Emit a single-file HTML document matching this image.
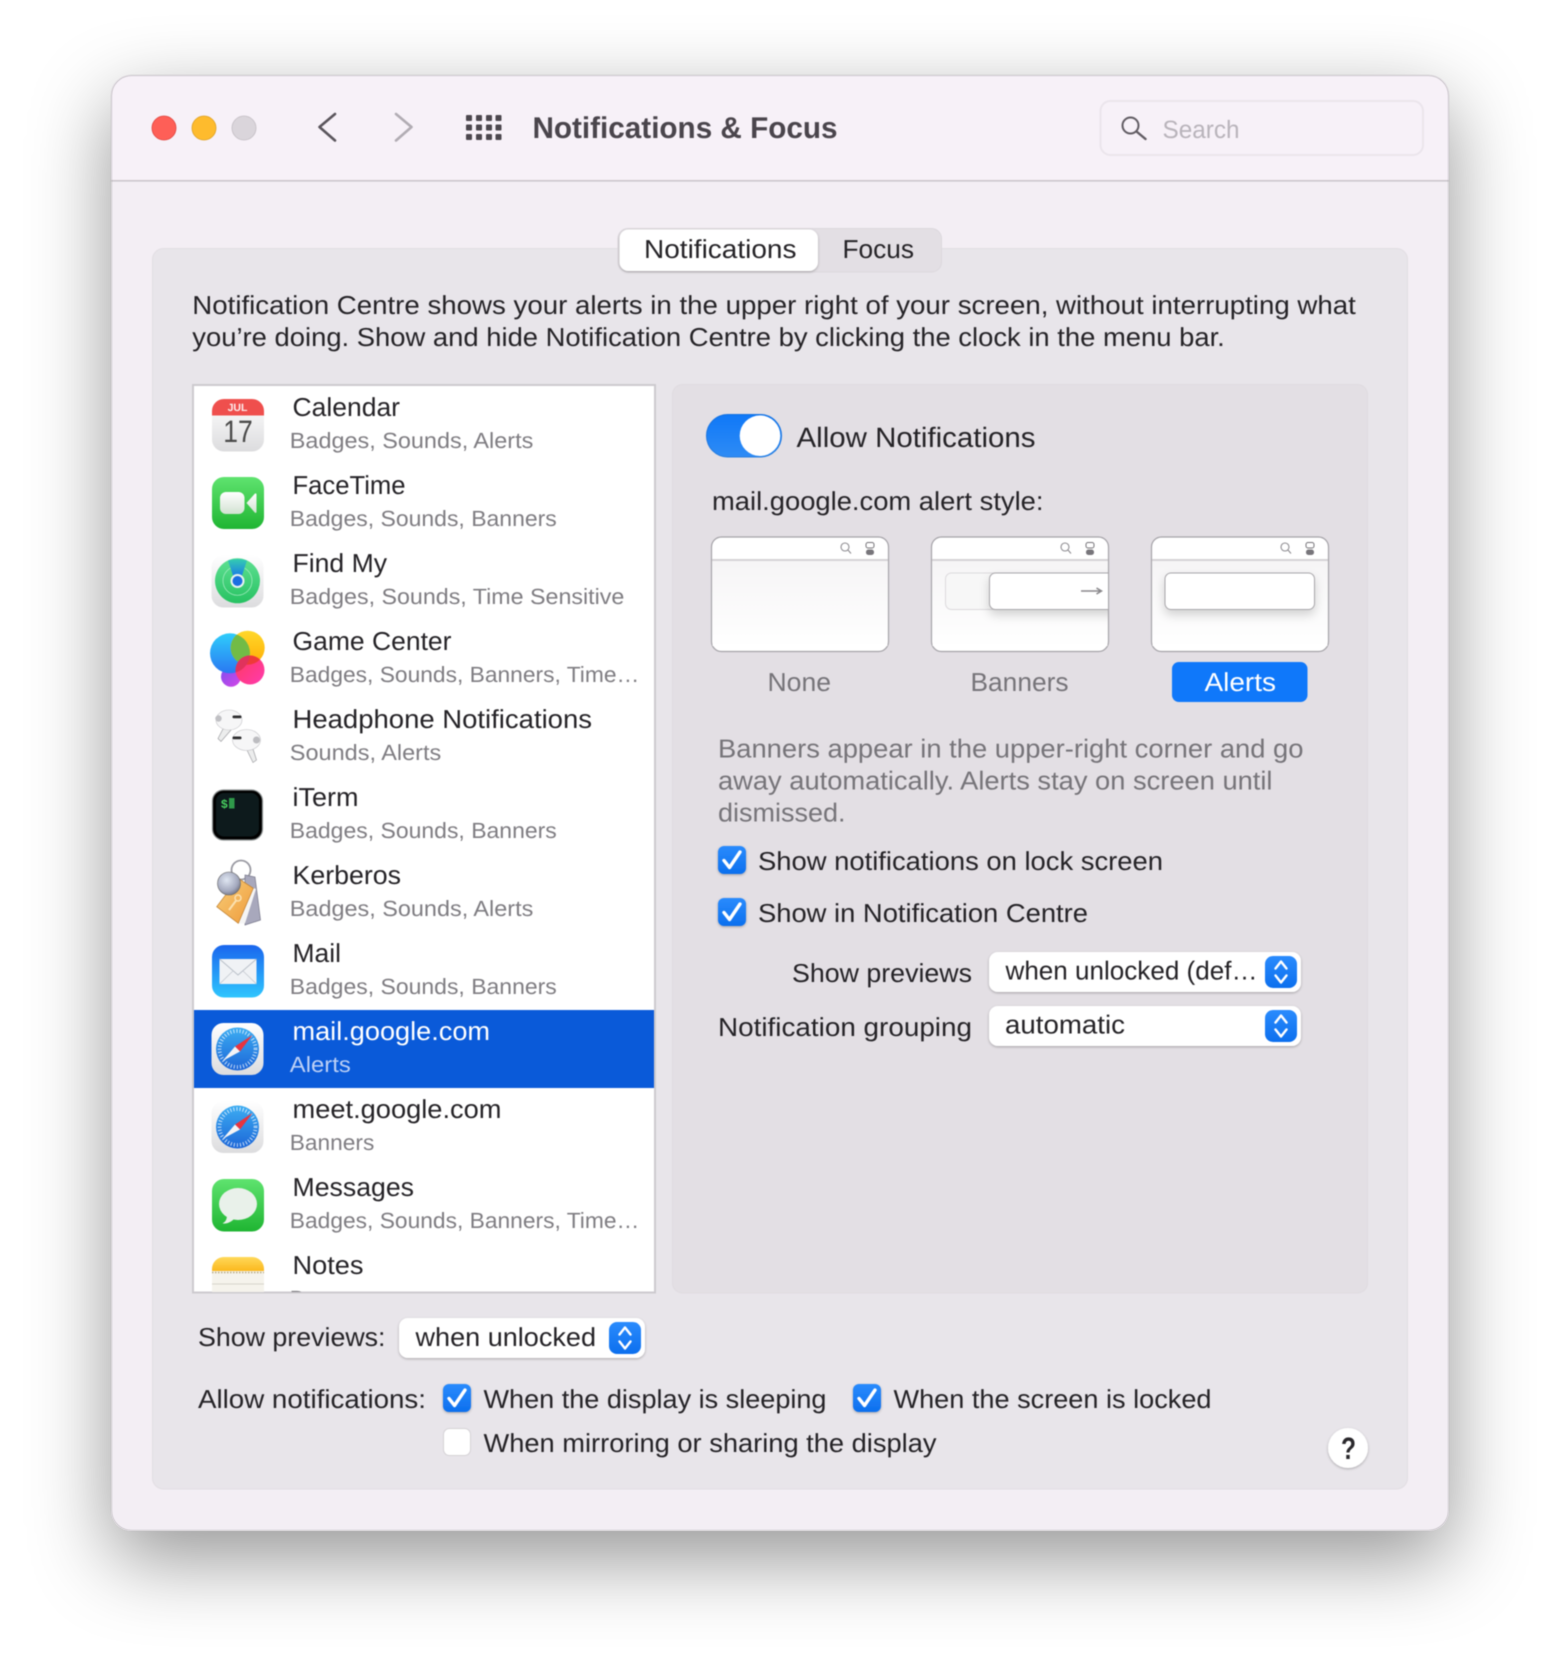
<!DOCTYPE html>
<html lang="en"><head><meta charset="utf-8"><title>Notifications &amp; Focus</title>
<style>
html,body{margin:0;padding:0;background:#fff;width:1560px;height:1678px;overflow:hidden}
#win{position:absolute;left:111px;top:75px;width:1338px;height:1456px;border-radius:20px;box-shadow:0 28px 80px 0 rgba(0,0,0,.42)}
svg{position:absolute;left:0;top:0;filter:blur(.4px)}
text{font-family:"Liberation Sans",sans-serif;fill:#252327;text-rendering:geometricPrecision}
.t{font-size:26px}.s{font-size:22px;fill:#7f7d82}
.g{fill:#767479}
</style></head><body>
<div id="win"></div>
<svg width="1560" height="1678" viewBox="0 0 1560 1678" xmlns="http://www.w3.org/2000/svg">
<defs>
<linearGradient id="blue" x1="0" y1="0" x2="0" y2="1"><stop offset="0" stop-color="#2a8bfd"/><stop offset="1" stop-color="#0c6fee"/></linearGradient>
<linearGradient id="ft" x1="0" y1="0" x2="0" y2="1"><stop offset="0" stop-color="#5fe36f"/><stop offset="1" stop-color="#1fb532"/></linearGradient>
<linearGradient id="ml" x1="0" y1="0" x2="0" y2="1"><stop offset="0" stop-color="#1a66ee"/><stop offset="1" stop-color="#2fc6fe"/></linearGradient>
<linearGradient id="wh" x1="0" y1="0" x2="0" y2="1"><stop offset="0" stop-color="#ffffff"/><stop offset="1" stop-color="#dcdcde"/></linearGradient>
<linearGradient id="safb" x1="0" y1="0" x2="0" y2="1"><stop offset="0" stop-color="#3dadf2"/><stop offset="1" stop-color="#1c66d8"/></linearGradient>
<linearGradient id="ne" x1="0" y1="0" x2="0" y2="1"><stop offset="0" stop-color="#ffd95a"/><stop offset="1" stop-color="#fbb81e"/></linearGradient>
<linearGradient id="tog" x1="0" y1="0" x2="0" y2="1"><stop offset="0" stop-color="#0f78f8"/><stop offset="1" stop-color="#2f8cf5"/></linearGradient>
<linearGradient id="or" x1="0" y1="0" x2="1" y2="1"><stop offset="0" stop-color="#f8cf7a"/><stop offset="1" stop-color="#ef9a3a"/></linearGradient>
<linearGradient id="pap" x1="0" y1="0" x2="0" y2="1"><stop offset="0" stop-color="#f6f5f6"/><stop offset="1" stop-color="#ffffff"/></linearGradient>
<linearGradient id="gb" x1="0" y1="0" x2="0" y2="1"><stop offset="0" stop-color="#2fcdfb"/><stop offset="1" stop-color="#2a78f2"/></linearGradient>
<linearGradient id="gy" x1="0" y1="0" x2="0" y2="1"><stop offset="0" stop-color="#ffd82a"/><stop offset="1" stop-color="#ffae05"/></linearGradient>
<linearGradient id="gp" x1="0" y1="0" x2="1" y2="1"><stop offset="0" stop-color="#ff3b5c"/><stop offset="1" stop-color="#ff3ab0"/></linearGradient>
<linearGradient id="gv" x1="0" y1="0" x2="1" y2="1"><stop offset="0" stop-color="#7d4ff0"/><stop offset="1" stop-color="#d746e6"/></linearGradient>
<linearGradient id="fm" x1="0" y1="0" x2="0" y2="1"><stop offset="0" stop-color="#5fe092"/><stop offset="1" stop-color="#27c262"/></linearGradient>
<linearGradient id="fb" x1="0" y1="0" x2="0" y2="1"><stop offset="0" stop-color="#34cdb0"/><stop offset="1" stop-color="#1a78e8"/></linearGradient>
<linearGradient id="cam" x1="0" y1="0" x2="0" y2="1"><stop offset="0" stop-color="#ffffff"/><stop offset="1" stop-color="#d2e2d2"/></linearGradient>
<radialGradient id="ball" cx=".4" cy=".35" r=".7"><stop offset="0" stop-color="#dfe6f2"/><stop offset=".7" stop-color="#a3a8bd"/><stop offset="1" stop-color="#6f7282"/></radialGradient>
<filter id="sh" x="-20%" y="-20%" width="140%" height="150%"><feDropShadow dx="0" dy="1" stdDeviation="1.2" flood-color="#000" flood-opacity=".28"/></filter>
<filter id="sh2" x="-20%" y="-30%" width="140%" height="180%"><feDropShadow dx="0" dy="5" stdDeviation="5" flood-color="#000" flood-opacity=".16"/></filter>
<clipPath id="winclip"><rect x="111" y="75" width="1338" height="1456" rx="20"/></clipPath>
<clipPath id="listclip"><rect x="194" y="386" width="460" height="906"/></clipPath>
<clipPath id="bc"><rect x="931" y="537" width="177" height="115" rx="10"/></clipPath>
<clipPath id="cb"><circle cx="230" cy="653.300" r="20"/></clipPath>
<clipPath id="cp"><circle cx="250" cy="670" r="14.500"/></clipPath>
<g id="chk"><rect width="28" height="28" rx="6" fill="url(#blue)" filter="url(#sh)"/><path d="M6 14.500 11.500 21.500 22 6" fill="none" stroke="#fff" stroke-width="3.400" stroke-linecap="round" stroke-linejoin="round"/></g>
<g id="stp"><rect width="32" height="32" rx="8" fill="url(#blue)"/><path d="M10.500 12.500 16 5.500 21.500 12.500M10.500 19.500 16 26.500 21.500 19.500" fill="none" stroke="#fff" stroke-width="2.400" stroke-linecap="round" stroke-linejoin="round"/></g>
<g id="saf">
<rect x="-26" y="-26" width="52" height="52" rx="12" fill="url(#wh)"/>
<circle r="21.500" fill="url(#safb)"/>
<circle r="18" fill="none" stroke="#fff" stroke-width="3.800" stroke-dasharray=".9 2.200" opacity=".8"/>
<path d="M15-14 2.500 2.500-2.500-2.500Z" fill="#e8343f"/><path d="M-15 12-2.500-2.500 2.500 2.500Z" fill="#f4f4f6"/>
</g>
<g id="mini"><circle cx="-1" cy="-1" r="4" fill="none" stroke="#8f8d92" stroke-width="1.100"/><path d="M2 2 5 5.500" stroke="#8f8d92" stroke-width="1.100"/><rect x="20" y="-5.500" width="8" height="5.500" rx="2" fill="#fff" stroke="#77757a" stroke-width="1"/><rect x="20" y="1.500" width="8" height="5.500" rx="2.500" fill="#77757a"/></g>
</defs>

<g clip-path="url(#winclip)">
<rect x="111" y="75" width="1338" height="1456" fill="#f3eef4"/>
<rect x="111" y="75" width="1338" height="105" fill="#f7f1f8"/>
<rect x="111" y="180" width="1338" height="1.600" fill="#cbc6cc"/>
</g>
<rect x="111.500" y="75.500" width="1337" height="1455" rx="20" fill="none" stroke="#8f8b90" stroke-opacity=".5"/>

<!-- toolbar -->
<circle cx="164" cy="128" r="12" fill="#fe5f57" stroke="#e0443e" stroke-width=".8"/>
<circle cx="204" cy="128" r="12" fill="#febb2d" stroke="#dea123" stroke-width=".8"/>
<circle cx="244" cy="128" r="12" fill="#dad5db" stroke="#c3bec4" stroke-width=".8"/>
<path d="M335 114 319.500 127 335 140.500" fill="none" stroke="#5a555c" stroke-width="2.600" stroke-linecap="round" stroke-linejoin="round"/>
<path d="M396 114 411.500 127 396 140.500" fill="none" stroke="#b1acb3" stroke-width="2.600" stroke-linecap="round" stroke-linejoin="round"/>
<g fill="#4c474e">
<rect x="466" y="115" width="6" height="6" rx="1"/><rect x="476" y="115" width="6" height="6" rx="1"/><rect x="486" y="115" width="6" height="6" rx="1"/><rect x="495.500" y="115" width="6" height="6" rx="1"/>
<rect x="466" y="124.500" width="6" height="6" rx="1"/><rect x="476" y="124.500" width="6" height="6" rx="1"/><rect x="486" y="124.500" width="6" height="6" rx="1"/><rect x="495.500" y="124.500" width="6" height="6" rx="1"/>
<rect x="466" y="134" width="6" height="6" rx="1"/><rect x="476" y="134" width="6" height="6" rx="1"/><rect x="486" y="134" width="6" height="6" rx="1"/><rect x="495.500" y="134" width="6" height="6" rx="1"/>
</g>
<text x="532.500" y="138" font-size="30" font-weight="700" style="fill:#4a454c" textLength="305" lengthAdjust="spacingAndGlyphs">Notifications &amp; Focus</text>
<rect x="1100.500" y="101" width="322.500" height="54" rx="10" fill="#f7f1f8" stroke="#ebe5ec" stroke-width="2"/>
<circle cx="1130.500" cy="125.500" r="8" fill="none" stroke="#625d64" stroke-width="2"/>
<path d="M1136.500 131.500 1145.500 139" stroke="#625d64" stroke-width="2.400" stroke-linecap="round"/>
<text x="1162.500" y="137.800" font-size="25" style="fill:#b9b4bb" textLength="77" lengthAdjust="spacingAndGlyphs">Search</text>

<!-- main panel -->
<rect x="152.500" y="248.500" width="1255" height="1240.500" rx="11" fill="#e8e5ea" stroke="#e2dee3"/>
<rect x="618" y="228.500" width="323.500" height="43.500" rx="10" fill="#e3dfe4" stroke="#dcd8dd"/>
<rect x="619.500" y="229.500" width="198.500" height="41.500" rx="9" fill="#fff" filter="url(#sh)"/>
<text class="t" x="644" y="257.800" textLength="152.500" lengthAdjust="spacingAndGlyphs">Notifications</text>
<text class="t" x="842.500" y="257.800" textLength="71.500" lengthAdjust="spacingAndGlyphs">Focus</text>
<text class="t" x="192.300" y="314" textLength="1163.500" lengthAdjust="spacingAndGlyphs">Notification Centre shows your alerts in the upper right of your screen, without interrupting what</text>
<text class="t" x="192.300" y="346" textLength="1032.500" lengthAdjust="spacingAndGlyphs">you’re doing. Show and hide Notification Centre by clicking the clock in the menu bar.</text>

<!-- list -->
<rect x="193" y="385" width="462" height="907.500" fill="#fff" stroke="#cdcacf" stroke-width="2"/>
<g clip-path="url(#listclip)">
<rect x="194" y="1010" width="460" height="78" fill="#0a5ad9"/>

<!-- calendar -->
<rect x="212" y="399" width="52" height="52.500" rx="12" fill="url(#wh)"/>
<path d="M212 415.500V411a12 12 0 0 1 12-12h28a12 12 0 0 1 12 12v4.500Z" fill="#ef4f4d"/>
<text x="237.500" y="411" font-size="10.500" font-weight="700" text-anchor="middle" style="fill:#fdeeee">JUL</text>
<text x="238" y="442" font-size="31" text-anchor="middle" style="fill:#4a4a4a" textLength="29.500" lengthAdjust="spacingAndGlyphs">17</text>

<!-- facetime -->
<rect x="212" y="477" width="52" height="52" rx="12" fill="url(#ft)"/>
<rect x="220" y="492" width="24.500" height="22" rx="6" fill="url(#cam)"/>
<path d="M246.500 503 255 493.500a1 1 0 0 1 1.500.7V512a1 1 0 0 1-1.500.7Z" fill="url(#cam)"/>

<!-- find my -->
<rect x="211.500" y="555" width="52" height="52.500" rx="12" fill="url(#wh)"/>
<circle cx="237.500" cy="580.800" r="22.500" fill="url(#fm)"/>
<circle cx="237.500" cy="580.800" r="14.500" fill="none" stroke="#a8ecc4" stroke-width=".7"/>
<path d="M228 560.500Q237.500 557.500 247 560.500L241.500 577H233.500Z" fill="url(#fb)"/>
<circle cx="237.500" cy="581" r="6" fill="#1b6ee0" stroke="#e8f2f0" stroke-width="2"/>

<!-- game center -->
<circle cx="231" cy="676.700" r="10" fill="url(#gv)"/>
<circle cx="230" cy="653.300" r="20" fill="url(#gb)"/>
<circle cx="247.700" cy="647.700" r="17" fill="url(#gy)"/>
<circle cx="247.700" cy="647.700" r="17" fill="#72bb46" clip-path="url(#cb)"/>
<circle cx="250" cy="670" r="14.500" fill="url(#gp)"/>
<g clip-path="url(#cp)"><circle cx="247.700" cy="647.700" r="17" fill="#ee3a38"/><circle cx="230" cy="653.300" r="20" fill="#e0325c"/></g>

<!-- airpods -->
<g>
<path d="M224 727 218 738.500 221 741.500 231 730Z" fill="#eceded" stroke="#a0a0a4" stroke-width=".7"/>
<ellipse cx="229" cy="720" rx="13" ry="10" fill="#f6f6f7" stroke="#c4c4c8" stroke-width=".6"/>
<circle cx="218.500" cy="718.500" r="3.200" fill="#c0c0c4"/>
<rect x="232.500" y="715.500" width="9" height="2.800" rx="1.200" fill="#2e2e30"/>
<path d="M246 748 253 762.500 256.500 760 252 746Z" fill="#eceded" stroke="#a0a0a4" stroke-width=".7"/>
<ellipse cx="246.500" cy="740" rx="14" ry="10.500" fill="#f6f6f7" stroke="#c4c4c8" stroke-width=".6"/>
<circle cx="256.500" cy="740" r="3.500" fill="#bcbcc0"/>
<rect x="232.500" y="736.500" width="9" height="2.800" rx="1.200" fill="#2e2e30"/>
</g>

<!-- iterm -->
<rect x="212.500" y="790" width="50" height="50" rx="11" fill="#000" stroke="#8d9292" stroke-width="1.200"/>
<rect x="216" y="793" width="43" height="43.500" rx="8" fill="#0d1a1c"/>
<text x="221" y="808" font-size="12" font-weight="700" style="fill:#49d060">$</text>
<rect x="229" y="798" width="5.500" height="10.500" fill="#2f9a4a"/>

<!-- kerberos -->
<circle cx="241" cy="870" r="9.500" fill="none" stroke="#9a9aa2" stroke-width="1.800"/>
<path d="M245 875 255 877 260.500 920 245 925Z" fill="#a8a8bc" stroke="#77778a" stroke-width=".7"/>
<path d="M238 923.500 245 923.500 256 889 253 888Z" fill="#f5f5f5"/>
<path d="M216.700 906.700 238.300 923.300 253.300 888.300 238.300 878.300Z" fill="url(#or)" stroke="#c08030" stroke-width=".7"/>
<circle cx="229" cy="883.500" r="11.500" fill="url(#ball)" stroke="#666" stroke-width=".6"/>
<path d="M229 910 236.500 900" stroke="#fbe1b0" stroke-width="2"/><circle cx="238" cy="898" r="3" fill="none" stroke="#fbe1b0" stroke-width="1.500"/>

<!-- mail -->
<rect x="212" y="945" width="52" height="52.500" rx="12" fill="url(#ml)"/>
<rect x="219.500" y="959" width="37" height="25" rx="1.500" fill="#f0f2f5"/>
<path d="M219.500 959 238 975 256.500 959" fill="none" stroke="#b9bfc8" stroke-width="1"/>
<path d="M219.500 984 233 971M256.500 984 243 971" stroke="#c3c8cf" stroke-width=".8"/>

<use href="#saf" x="237.500" y="1049"/>
<use href="#saf" x="237.500" y="1127"/>

<!-- messages -->
<rect x="212" y="1179" width="52" height="52.500" rx="12" fill="url(#ft)"/>
<ellipse cx="238" cy="1204" rx="19" ry="16" fill="#e9f1ea"/>
<path d="M227 1215C227 1220 225 1222 222.500 1223.500 227 1224 231 1222 234 1219Z" fill="#e9f1ea"/>

<!-- notes -->
<rect x="212" y="1257" width="52" height="52" rx="12" fill="#f5f3ec"/>
<path d="M212 1271v-2a12 12 0 0 1 12-12h28a12 12 0 0 1 12 12v2Z" fill="url(#ne)"/>
<path d="M212 1272.500H264" stroke="#b9a97e" stroke-width="1.500" stroke-dasharray="1.500 1.500"/>
<path d="M212 1284H264" stroke="#d6d4cc" stroke-width="1"/>

<!-- titles -->
<text class="t" x="292.500" y="415.800" textLength="107.500" lengthAdjust="spacingAndGlyphs">Calendar</text>
<text class="s" x="289.800" y="447.800" textLength="243.500" lengthAdjust="spacingAndGlyphs">Badges, Sounds, Alerts</text>
<text class="t" x="292.500" y="493.800" textLength="113" lengthAdjust="spacingAndGlyphs">FaceTime</text>
<text class="s" x="289.800" y="525.800" textLength="267" lengthAdjust="spacingAndGlyphs">Badges, Sounds, Banners</text>
<text class="t" x="292.500" y="571.800" textLength="94.500" lengthAdjust="spacingAndGlyphs">Find My</text>
<text class="s" x="289.800" y="603.800" textLength="334.500" lengthAdjust="spacingAndGlyphs">Badges, Sounds, Time Sensitive</text>
<text class="t" x="292.500" y="649.800" textLength="159" lengthAdjust="spacingAndGlyphs">Game Center</text>
<text class="s" x="289.800" y="681.800" textLength="349.500" lengthAdjust="spacingAndGlyphs">Badges, Sounds, Banners, Time…</text>
<text class="t" x="292.500" y="727.800" textLength="299.500" lengthAdjust="spacingAndGlyphs">Headphone Notifications</text>
<text class="s" x="289.800" y="759.800" textLength="151.500" lengthAdjust="spacingAndGlyphs">Sounds, Alerts</text>
<text class="t" x="292.500" y="805.800" textLength="66" lengthAdjust="spacingAndGlyphs">iTerm</text>
<text class="s" x="289.800" y="837.800" textLength="267" lengthAdjust="spacingAndGlyphs">Badges, Sounds, Banners</text>
<text class="t" x="292.500" y="883.800" textLength="108.500" lengthAdjust="spacingAndGlyphs">Kerberos</text>
<text class="s" x="289.800" y="915.800" textLength="243.500" lengthAdjust="spacingAndGlyphs">Badges, Sounds, Alerts</text>
<text class="t" x="292.500" y="961.800" textLength="48.500" lengthAdjust="spacingAndGlyphs">Mail</text>
<text class="s" x="289.800" y="993.800" textLength="267" lengthAdjust="spacingAndGlyphs">Badges, Sounds, Banners</text>
<text class="t" x="292.500" y="1039.800" style="fill:#fff" textLength="197.500" lengthAdjust="spacingAndGlyphs">mail.google.com</text>
<text class="s" x="289.800" y="1071.800" style="fill:#bcd0f6" textLength="61" lengthAdjust="spacingAndGlyphs">Alerts</text>
<text class="t" x="292.500" y="1117.800" textLength="209" lengthAdjust="spacingAndGlyphs">meet.google.com</text>
<text class="s" x="289.800" y="1149.800" textLength="84.500" lengthAdjust="spacingAndGlyphs">Banners</text>
<text class="t" x="292.500" y="1195.800" textLength="121.500" lengthAdjust="spacingAndGlyphs">Messages</text>
<text class="s" x="289.800" y="1227.800" textLength="349.500" lengthAdjust="spacingAndGlyphs">Badges, Sounds, Banners, Time…</text>
<text class="t" x="292.500" y="1273.800" textLength="71" lengthAdjust="spacingAndGlyphs">Notes</text>
<text class="s" x="289.800" y="1305.800">Banners</text>
</g>

<!-- right panel -->
<rect x="672.500" y="384.500" width="695" height="908.500" rx="10" fill="#e3dfe4" stroke="#dfdbe0"/>
<rect x="706" y="414" width="76" height="43.500" rx="21.750" fill="url(#tog)"/>
<rect x="706.500" y="414.500" width="75" height="42.500" rx="21.250" fill="none" stroke="#1a64b8" stroke-opacity=".35"/>
<circle cx="760" cy="435.700" r="20.300" fill="#fff"/>
<text x="796.500" y="446.800" font-size="28" textLength="239" lengthAdjust="spacingAndGlyphs">Allow Notifications</text>
<text class="t" x="712" y="510" textLength="331.500" lengthAdjust="spacingAndGlyphs">mail.google.com alert style:</text>

<!-- thumbs -->
<g stroke="#a5a3a8" stroke-width="1.200" fill="#fff">
<rect x="711.500" y="537" width="177" height="114.500" rx="10"/>
<rect x="931.500" y="537" width="177" height="114.500" rx="10"/>
<rect x="1151.500" y="537" width="177" height="114.500" rx="10"/>
</g>
<rect x="712.500" y="561" width="175" height="85" fill="url(#pap)"/>
<rect x="932.500" y="561" width="175" height="85" fill="url(#pap)"/>
<rect x="1152.500" y="561" width="175" height="85" fill="url(#pap)"/>
<g fill="#d5d3d6"><rect x="712" y="559" width="176" height="2"/><rect x="932" y="559" width="176" height="2"/><rect x="1152" y="559" width="176" height="2"/></g>
<use href="#mini" x="846" y="548"/><use href="#mini" x="1066" y="548"/><use href="#mini" x="1286" y="548"/>
<g clip-path="url(#bc)">
<rect x="945.500" y="573" width="60" height="36.500" rx="6" fill="#f7f7f7" stroke="#dcdadd"/>
<rect x="989.500" y="573" width="130" height="36.500" rx="6" fill="#fff" stroke="#a8a6aa" filter="url(#sh2)"/>
<path d="M1081 591H1101M1096.500 588 1101.500 591 1096.500 594" fill="none" stroke="#8a888c" stroke-width="1.500"/>
</g>
<rect x="1165" y="573" width="149.500" height="36.500" rx="6" fill="#fff" stroke="#a8a6aa" filter="url(#sh2)"/>

<text class="t g" x="767.500" y="691" textLength="63.500" lengthAdjust="spacingAndGlyphs">None</text>
<text class="t g" x="970.500" y="691" textLength="98" lengthAdjust="spacingAndGlyphs">Banners</text>
<rect x="1172" y="662" width="135.500" height="40" rx="7" fill="#0f78fa"/>
<text class="t" x="1204.500" y="691" style="fill:#fff" textLength="71.500" lengthAdjust="spacingAndGlyphs">Alerts</text>

<text class="t g" x="718" y="757.500" textLength="585.500" lengthAdjust="spacingAndGlyphs">Banners appear in the upper-right corner and go</text>
<text class="t g" x="718" y="789.500" textLength="554.500" lengthAdjust="spacingAndGlyphs">away automatically. Alerts stay on screen until</text>
<text class="t g" x="718" y="821.500" textLength="127.500" lengthAdjust="spacingAndGlyphs">dismissed.</text>

<use href="#chk" x="718" y="846"/>
<text class="t" x="758" y="869.800" textLength="405" lengthAdjust="spacingAndGlyphs">Show notifications on lock screen</text>
<use href="#chk" x="718" y="898"/>
<text class="t" x="758" y="921.800" textLength="330" lengthAdjust="spacingAndGlyphs">Show in Notification Centre</text>

<text class="t" x="792" y="981.800" textLength="180" lengthAdjust="spacingAndGlyphs">Show previews</text>
<rect x="989" y="952" width="312" height="40" rx="9" fill="#fff" filter="url(#sh)"/>
<text class="t" x="1005.500" y="979.500" textLength="252" lengthAdjust="spacingAndGlyphs">when unlocked (def…</text>
<use href="#stp" x="1265" y="956"/>

<text class="t" x="718" y="1035.800" textLength="254" lengthAdjust="spacingAndGlyphs">Notification grouping</text>
<rect x="989" y="1006" width="312" height="40" rx="9" fill="#fff" filter="url(#sh)"/>
<text class="t" x="1005" y="1033.500" textLength="120" lengthAdjust="spacingAndGlyphs">automatic</text>
<use href="#stp" x="1265" y="1010"/>

<!-- bottom -->
<text class="t" x="198" y="1345.800" textLength="187.500" lengthAdjust="spacingAndGlyphs">Show previews:</text>
<rect x="399" y="1318" width="246" height="40" rx="9" fill="#fff" filter="url(#sh)"/>
<text class="t" x="415.500" y="1345.800" textLength="180.500" lengthAdjust="spacingAndGlyphs">when unlocked</text>
<use href="#stp" x="609" y="1322"/>

<text class="t" x="198" y="1407.800" textLength="228" lengthAdjust="spacingAndGlyphs">Allow notifications:</text>
<use href="#chk" x="443" y="1384"/>
<text class="t" x="483.500" y="1407.800" textLength="343" lengthAdjust="spacingAndGlyphs">When the display is sleeping</text>
<use href="#chk" x="853" y="1384"/>
<text class="t" x="893.500" y="1407.800" textLength="318" lengthAdjust="spacingAndGlyphs">When the screen is locked</text>
<rect x="443.500" y="1428.500" width="27" height="27" rx="6" fill="#fff" stroke="#d5d2d6"/>
<text class="t" x="483.500" y="1451.800" textLength="453" lengthAdjust="spacingAndGlyphs">When mirroring or sharing the display</text>

<circle cx="1348" cy="1448" r="20" fill="#fff" filter="url(#sh)"/>
<text x="1348.500" y="1459" font-size="31" font-weight="700" text-anchor="middle" style="fill:#2a282c" textLength="15" lengthAdjust="spacingAndGlyphs">?</text>
</svg>
</body></html>
